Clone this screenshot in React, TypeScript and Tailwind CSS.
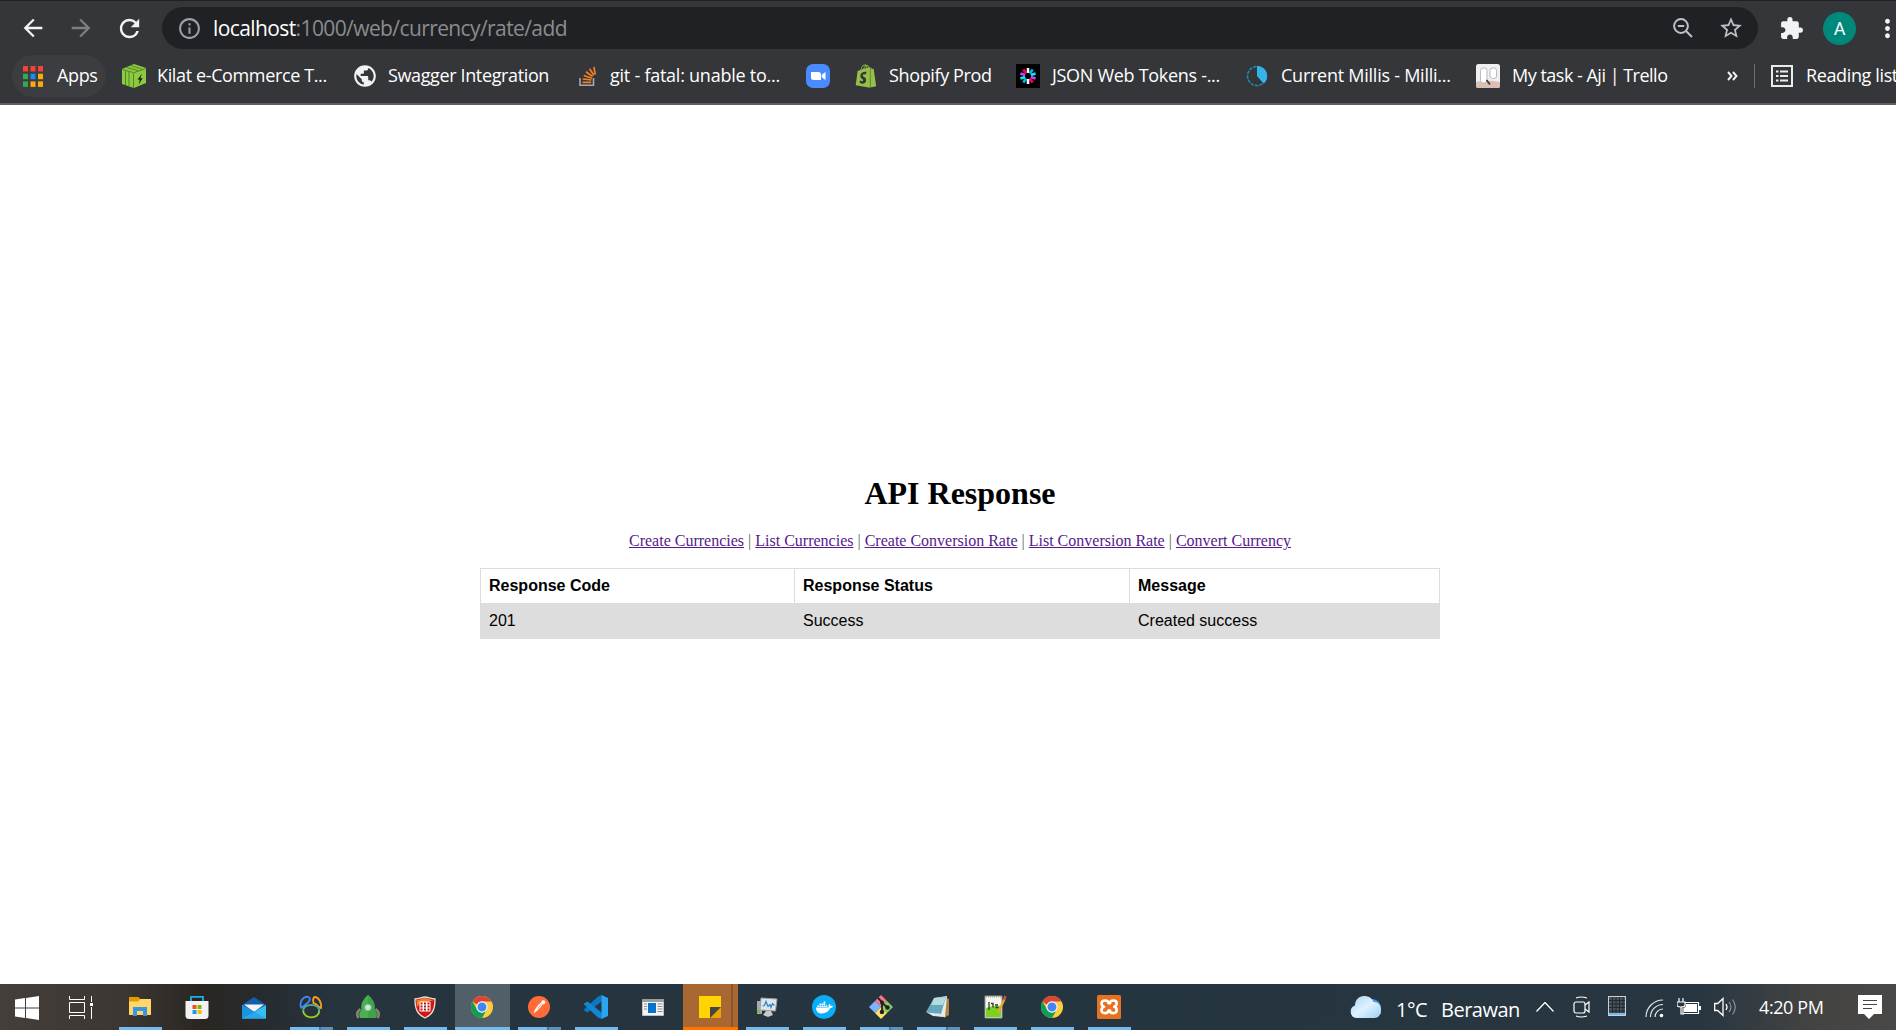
import React from 'react';
import { MdArrowBack, MdArrowForward, MdRefresh, MdInfoOutline, MdStarBorder, MdExtension, MdMoreVert, MdPublic } from 'react-icons/md';
import { FaDocker, FaShopify } from 'react-icons/fa';

type Kid = { children?: React.ReactNode };

function Svg({ w = 24, h = 24, box, children }: Kid & { w?: number; h?: number; box?: string }) {
  return (
    <svg width={w} height={h} viewBox={box ?? `0 0 ${w} ${h}`} fill="none" className="shrink-0">
      {children}
    </svg>
  );
}

const Apps = () => (
  <Svg w={20} h={21}>
    {['#f44336', '#f44336', '#f44336', '#34a853', '#1e88f5', '#fbaa0a', '#34a853', '#fbaa0a', '#fbaa0a'].map((c, i) => (
      <rect key={i} x={(i % 3) * 7.5} y={Math.floor(i / 3) * 7.7} width="5" height="5.5" fill={c} />
    ))}
  </Svg>
);

const Kilat = () => (
  <Svg w={24} h={24}>
    <path d="M0 5 12 0l12 4v15L12 24 0 20Z" fill="#8ccb3f" />
    <path d="M.5 5.500 11 8.500M4.500 3.500 16 6.500M8.500 1.500 20 5M3.500 7v14M7 8v14.500M11.500 9v15M11.500 8.800 24 4.500" stroke="#4d7d22" strokeWidth=".9" />
    <path d="m20 9.500-4.500 6 2.200.2-1 4.800 4-6.300-2.200-.2Z" fill="#1f2d15" />
  </Svg>
);

const Globe = () => <MdPublic size={26} color="#f1f3f4" className="-ml-[2px] shrink-0" />;

const Stack = () => (
  <Svg w={18} h={20}>
    <path d="M1 12v7.200h13.500V12" stroke="#a5a8ad" strokeWidth="1.600" />
    <path d="M3.500 16.300h8.700M3.800 13l8.600 1M4.800 9.500l8 2.700M7 5.800l6.600 4.700M10.500 2.800l4.500 6.400M14.800 1l1.600 7.500" stroke="#f48024" strokeWidth="1.700" />
  </Svg>
);

const Zoom = () => (
  <Svg w={24} h={24}>
    <rect width="24" height="24" rx="7" fill="#4a8cff" />
    <path d="M5 8h7.500q2.500 0 2.500 2.500V16H7.500Q5 16 5 13.500ZM15.800 10.800 19.500 8v8l-3.700-2.800Z" fill="#fff" />
  </Svg>
);

const Jwt = () => (
  <Svg w={24} h={24}>
    <rect width="24" height="24" fill="#000" />
    <g strokeWidth="2.600">
      {['#fff', '#00b9f1', '#00f2e6', '#d63aff', '#fb015b', '#fff', '#00b9f1', '#00f2e6', '#d63aff', '#fb015b'].map((c, i) => (
        <path key={i} d="M12 4v5" stroke={c} transform={`rotate(${i * 36} 12 12)`} />
      ))}
    </g>
  </Svg>
);

const Millis = () => (
  <Svg w={22} h={22}>
    <circle cx="11" cy="11" r="9.500" stroke="#2489b0" strokeWidth="1.500" strokeDasharray="3.500 1" />
    <path d="M11 1a10 10 0 0 1 6.500 17.600L11 11Z" fill="#35b4e8" />
  </Svg>
);

const Trello = () => (
  <Svg w={24} h={24}>
    <rect width="24" height="24" rx="2.500" fill="#f0eeee" />
    <path d="M0 18c8-2 16-1 24 0v3.500Q24 24 21.500 24h-19Q0 24 0 21.500Z" fill="#d9bfb4" />
    <rect x="4.500" y="4" width="6.500" height="15" rx="2.500" fill="#fff" stroke="#b9b9be" />
    <rect x="14" y="4" width="6.500" height="10.500" rx="2.500" fill="#fff" stroke="#b9b9be" />
    <path d="m10.500 16 3.500 4.500" stroke="#4b3732" strokeWidth="1.800" />
  </Svg>
);

const ReadingList = () => (
  <Svg w={22} h={22}>
    <rect x="1" y="1" width="20" height="20" stroke="#e8eaed" strokeWidth="2" />
    <path d="M5 6.500h2.500M5 11h2.500M5 15.500h2.500M9 6.500h8M9 11h8M9 15.500h8" stroke="#e8eaed" strokeWidth="2" />
  </Svg>
);

const ZoomOut = () => (
  <Svg w={20} h={20}>
    <circle cx="8" cy="8" r="6.900" stroke="#bdc1c6" strokeWidth="2" />
    <path d="M4.800 8h6.400M13 13l6 6" stroke="#bdc1c6" strokeWidth="2" />
  </Svg>
);

function Bookmark({ w, iw, icon, text }: { w: string; iw: string; icon: React.ReactNode; text: React.ReactNode }) {
  return (
    <div className={`flex h-full shrink-0 items-center ${w}`}>
      <div className={`flex shrink-0 items-center ${iw}`}>{icon}</div>
      <span className="pb-px">{text}</span>
    </div>
  );
}

/* Taskbar artwork */
const Windows = () => (
  <Svg>
    <path d="M0 3.500 10 2v9.500H0ZM11 1.900 24 0v11.500H11ZM0 12.500h10V22L0 20.500ZM11 12.500h13V24l-13-1.900Z" fill="#fff" />
  </Svg>
);
const TaskView = () => (
  <Svg>
    <path d="M.5 0v3.500h15V0M.5 6.500h15v10H.5ZM.5 23v-3.500h15V23M22.500 0v6M22.500 11v12" stroke="#fff" />
    <rect x="21" y="7" width="3" height="3" fill="#fff" />
  </Svg>
);
const Explorer = () => (
  <Svg w={22} h={20}>
    <path d="M0 0h9.500L12 2.500h10V8H0Z" fill="#e19c00" />
    <path d="M0 4.500h9L11.500 2H22v16H0Z" fill="#ffd766" />
    <path d="M4 10h14v9h-4v-5H8v5H4Z" fill="#3a96e0" />
  </Svg>
);
const Store = () => (
  <Svg w={24} h={24}>
    <path d="M6 7V1.800h12V7" stroke="#1ab0ea" strokeWidth="1.800" />
    <path d="M.500 6h23v14.500Q23.500 24 20 24H4Q.500 24 .500 20.500Z" fill="#f3f2f2" />
    <path d="M7.500 10h4v4h-4Z" fill="#f25022" />
    <path d="M12.500 10h4v4h-4Z" fill="#7fba00" />
    <path d="M7.500 15h4v4h-4Z" fill="#00a4ef" />
    <path d="M12.500 15h4v4h-4Z" fill="#ffb900" />
  </Svg>
);
const Mail = () => (
  <Svg w={24} h={23}>
    <path d="M0 9 12 1l12 8v6H0Z" fill="#0f5fae" />
    <path d="M2 8.500h20L12 16Z" fill="#f5f5f5" />
    <path d="M0 9v13.500h24V9l-12 7Z" fill="#35bdf2" />
    <path d="M0 9v13.500L13 16Z" fill="#1a94dc" />
    <path d="M24 22.500H0L13 16Z" fill="#28a8ea" />
  </Svg>
);
const Navicat = () => (
  <Svg w={24} h={24}>
    <path d="M2 12.500C0 6 5 1 9 1.800c3.500 1 1.500 5-.5 6.200L3 12.500Z" stroke="#4285f4" strokeWidth="1.900" />
    <path d="M14.500 8C13.500 4 14.500 1.500 16.500 2c3.500 1 6.500 6 5.500 11-3 0-3.500-4-7.500-5Z" stroke="#f9a01b" strokeWidth="1.900" />
    <path d="M4.200 16.500c-.5-5 4-6.500 8-6.500s8.500 2 8 6.500" stroke="#48a99b" strokeWidth="1.900" />
    <path d="M20.200 16c0 8.500-15.500 8.500-16 0" stroke="#9bc926" strokeWidth="1.900" />
  </Svg>
);
const Rocket = () => (
  <Svg w={24} h={24}>
    <path d="M4.500 14c-4 3-4 6-2 9M19.500 14c4 3 4 6 2 9" stroke="#8c806f" strokeWidth="2.500" />
    <path d="M12 0c5 4 7.500 9 6.500 14.500L21 19l-1 4H4l-1-4 2.500-4.500C4.500 9 7 4 12 0Z" fill="#4cb050" />
    <path d="M12 0v23h8l1-4-2.500-4.500C19.500 9 17 4 12 0Z" fill="#3fa34c" />
    <circle cx="12" cy="12.500" r="3.300" fill="#c9ebd7" stroke="#7bb98c" />
  </Svg>
);
const Shield = () => (
  <Svg w={22} h={23}>
    <path d="M1 3C5 3 8 1 11 1s6 2 10 2c0 9-1.500 15-10 19C2.500 18 1 12 1 3Z" fill="#d3150f" stroke="#e6dedb" strokeWidth="1.300" />
    <path d="M2.500 4C6 4 8 2 11 2s5 2 8.500 2C16 6 8 5 2.800 11Z" fill="#f0802c" />
    <rect x="5.500" y="5.500" width="11" height="10" rx="1" fill="#fff" />
    {[0, 1, 2].map((r) => (
      <path key={r} d={`M6.500 ${6.500 + r * 3}h2v2h-2ZM10 ${6.500 + r * 3}h2v2h-2ZM13.500 ${6.500 + r * 3}h2v2h-2Z`} fill="#b81410" />
    ))}
  </Svg>
);
const Chrome = () => (
  <Svg w={22} h={22} box="0 0 22 22">
    <circle cx="11" cy="11" r="11" fill="#ffcd40" />
    <path d="M1.470 5.500A11 11 0 0 1 20.530 5.500H11a5.500 5.500 0 0 0-5 3.300Z" fill="#db4437" />
    <path d="M1.470 5.500A11 11 0 0 0 11 22l4.760-8.250A5.500 5.500 0 0 1 6.240 13.750Z" fill="#0f9d58" />
    <circle cx="11" cy="11" r="5.100" fill="#4285f4" stroke="#f1f1f1" strokeWidth="1.300" />
  </Svg>
);
const Postman = () => (
  <Svg w={22} h={22}>
    <circle cx="11" cy="11" r="11" fill="#ff6c37" />
    <path d="M5.500 17.500c1-4.500 4-8 7.500-11l1.800 1.800c-2.800 3.700-5.500 7-9.300 9.200Z" fill="#fff" />
    <circle cx="15.300" cy="6.200" r="2" fill="#fff" />
    <path d="M9 13.500 13.500 8" stroke="#ff6c37" strokeWidth=".6" />
  </Svg>
);
const Code = () => (
  <Svg w={24} h={24}>
    <path d="m17.500 6.500-14 11L0 15.500v-1L14 1.500 18 0Z" fill="#0a76c4" />
    <path d="m17.500 17.500-14-11L0 8.500v1l14 13L18 24Z" fill="#1188d4" />
    <path d="m17.500 0 6.500 3v18l-6.500 3Z" fill="#2aa5f2" />
  </Svg>
);
const WindowApp = () => (
  <Svg w={22} h={17}>
    <rect width="22" height="17" fill="#f4f4f4" stroke="#8b8b8b" />
    <path d="M0 0h22v3H0Z" fill="#9b9b9b" />
    <rect x="6" y="4" width="8" height="10" fill="#0a70ce" />
    <path d="M2 5h3M2 7.500h3M2 10h3M15.500 5h5M15.500 7.500h5M15.500 10h5M15.500 12.500h5" stroke="#8b8b8b" />
  </Svg>
);
const Notes = () => (
  <Svg w={22} h={22}>
    <rect width="22" height="22" fill="#ffd400" />
    <path d="M11 22V11h11v11Z" fill="#eaa500" />
    <path d="M11 22V11h11Z" fill="#454545" />
  </Svg>
);
const Monitor = () => (
  <Svg w={22} h={20}>
    <path d="M1 4h5v13H1Z" fill="#aaa" />
    <path d="M1 13h3v3H1Z" fill="#6fc03c" />
    <path d="m5 1 16 1-1.500 12L4 13Z" fill="#dfe5ea" stroke="#9a9fa3" />
    <path d="m6.500 9 2-.5 1.500-4 2 5 2-2 1 3 1.500-4 2 2" stroke="#2885c5" strokeWidth="1.200" />
    <path d="M10 14h5l2 4-5 2-5-2Z" fill="#c9c9c9" />
  </Svg>
);
const Docker = () => (
  <div className="flex size-6 items-center justify-center rounded-full bg-[#0aadf8]">
    <FaDocker size={17} color="#fff" />
  </div>
);
const Git = () => (
  <Svg w={24} h={24}>
    <path d="m12 0 6 6-6 6-6-6Z" fill="#f37983" />
    <path d="m6 6 6 6-6 6-6-6Z" fill="#80b3ff" />
    <path d="m18 6 6 6-6 6-6-6Z" fill="#8ccf5e" />
    <path d="m12 12 6 6-6 6-6-6Z" fill="#ffe26b" />
    <path d="m9 3 4 4v10M13 8l5 4" stroke="#222" strokeWidth="1.800" />
    <circle cx="13" cy="7.500" r="2" fill="#222" />
    <circle cx="18.500" cy="12.500" r="2.300" fill="#222" />
    <circle cx="13" cy="17" r="2.300" fill="#222" />
  </Svg>
);
const Notepad = () => (
  <Svg w={24} h={22}>
    <path d="M20 2l3 1v16l-5 3Z" fill="#b5823b" />
    <path d="M8 2 21 0l-2 21-8-1Z" fill="#e6edf0" />
    <path d="M8 2 20 1l-5 17-15-2Z" fill="#64a9bb" />
    <path d="M8 2 20 1l-3 8-12 0Z" fill="#b3d9e1" />
    <path d="m0 16 15 2 4 3-12-1Z" fill="#dde7ea" />
  </Svg>
);
const NotepadPlus = () => (
  <Svg w={24} h={24}>
    <path d="M2 1h17v22H2Z" fill="#f3f7ed" stroke="#8f948b" />
    <path d="M3 13q8-3 15-2v11H3Z" fill="#77d31e" />
    <path d="M3 2h15" stroke="#999" strokeDasharray="1 1" />
    <path d="M6 7v8M8 8.500h2v4M12 10h3M12.500 12.500h3" stroke="#333" strokeWidth="1.300" />
    <path d="M21.500 4 15 18" stroke="#eaa42c" strokeWidth="2.400" />
    <path d="m21 5 1.500-4" stroke="#cf5149" strokeWidth="2.600" />
  </Svg>
);
const Xampp = () => (
  <Svg>
    <rect width="24" height="24" rx="1.500" fill="#e8711f" />
    <path
      d="M8 5.500Q4.500 5.500 4.500 8.300T7 11.800q-2.500.7-2.500 3.500t3.500 2.800 3.500-2.600h1.500q0 2.600 3.300 2.600t3.400-2.800-2.500-3.500q2.500-.7 2.500-3.500T16.300 5.500 13 8.300h-1.500Q11.500 5.500 8 5.500Z"
      stroke="#fff"
      strokeWidth="2.600"
      strokeLinejoin="round"
    />
  </Svg>
);

type Mode = 'none' | 'open' | 'multi' | 'active' | 'alert';
const tasks: [React.FC, Mode][] = [
  [Explorer, 'open'], [Store, 'none'], [Mail, 'none'], [Navicat, 'multi'], [Rocket, 'open'], [Shield, 'open'],
  [Chrome, 'active'], [Postman, 'multi'], [Code, 'open'], [WindowApp, 'none'], [Notes, 'alert'], [Monitor, 'open'],
  [Docker, 'open'], [Git, 'multi'], [Notepad, 'multi'], [NotepadPlus, 'open'], [Chrome, 'open'], [Xampp, 'open'],
];

function Task({ Icon, mode }: { Icon: React.FC; mode: Mode }) {
  const tint = mode === 'active' ? 'bg-[#515f68]' : mode === 'alert' ? 'bg-[#a96732]' : '';
  return (
    <div className="flex h-full w-[57px] shrink-0 justify-center">
      <div className={`relative flex h-full w-[55px] flex-col items-center ${tint}`}>
        {mode === 'alert' && <div className="absolute top-0 right-0 h-full w-[7px] border-l-2 border-[#8d542b]" />}
        <div className="relative flex h-[43px] items-center pt-[3px] pr-px"><Icon /></div>
        {mode === 'active' && <div className="h-[3px] w-full bg-[#76b9ed]" />}
        {mode === 'alert' && <div className="relative h-[3px] w-full bg-[#ff7300]" />}
        {mode === 'open' && <div className="h-[3px] w-[43px] bg-[#76b9ed]" />}
        {mode === 'multi' && (
          <div className="flex h-[3px] w-[43px]">
            <div className="w-[29px] bg-[#76b9ed]" />
            <div className="w-[2px] bg-[#4a7295]" />
            <div className="w-3 bg-[#5e91b8]" />
          </div>
        )}
      </div>
    </div>
  );
}

const Cloud = () => (
  <Svg w={33} h={24}>
    <defs>
      <linearGradient id="cloud" x1="0" y1="0" x2="1" y2="1">
        <stop stopColor="#a8d6f5" />
        <stop offset=".5" stopColor="#dff1fd" />
        <stop offset="1" stopColor="#9fd0f3" />
      </linearGradient>
    </defs>
    <path d="M20 4c6-1 12 3 12 9v6H20Z" fill="#4597dc" />
    <path d="M7 23a6.500 6.500 0 0 1-1-12.500C6 5 10 1 15 1c4.500 0 8 2 9.500 6 5 0 7.500 3.500 7.500 8s-2.500 8-6.500 8Z" fill="url(#cloud)" />
  </Svg>
);

const th = 'h-[35px] border border-[#dddddd] px-2 py-0 text-left align-middle font-bold leading-[18px]';
const td = 'h-[35px] border border-[#dddddd] px-2 pt-0 pb-px text-left align-middle leading-[18px]';

export default function App() {
  const links = ['Create Currencies', 'List Currencies', 'Create Conversion Rate', 'List Conversion Rate', 'Convert Currency'];
  return (
    <div className="flex h-[1030px] w-[1896px] flex-col overflow-hidden bg-white font-['Open_Sans','Noto_Sans',sans-serif]">
      <header className="flex h-[105px] shrink-0 flex-col border-t border-b-2 border-t-[#202124] border-b-[#5f5e62] bg-[#35363a] text-white">
        <div className="mt-[6px] flex h-[42px] shrink-0 items-center">
          <div className="flex w-[162px] shrink-0 items-center pl-[19px]">
            <MdArrowBack size={28} color="#f1f3f4" className="shrink-0" />
            <MdArrowForward size={28} color="#7e7f82" className="ml-5 shrink-0" />
            <MdRefresh size={29} color="#f1f3f4" className="ml-[20px] shrink-0" />
          </div>
          <div className="flex h-full w-[1596px] shrink-0 items-center rounded-full bg-[#202124]">
            <MdInfoOutline size={25} color="#9aa0a6" className="ml-[15px] shrink-0" />
            <div className="ml-[11px] w-[360px] pt-[2px] text-[21px] tracking-[-0.6px] whitespace-nowrap text-[#8b8c8f]">
              <span className="text-white">localhost</span>:1000/web/currency/rate/add
            </div>
            <div className="ml-auto flex items-center pr-[14px]">
              <ZoomOut />
              <MdStarBorder size={26} color="#bdc1c6" className="ml-[25px]" />
            </div>
          </div>
          <MdExtension size={25} color="#f1f3f4" className="ml-[21px] shrink-0" />
          <div className="ml-[19px] flex size-[33px] shrink-0 items-center justify-center rounded-full bg-[#00897b] font-['Roboto',sans-serif] text-[18px] text-white">A</div>
          <MdMoreVert size={29} color="#f1f3f4" className="ml-[17px] shrink-0" />
        </div>
        <div className="mt-[6px] flex h-[42px] items-center text-[18px] tracking-[-0.37px] whitespace-nowrap">
          <div className="ml-3 flex h-full w-[94px] shrink-0 items-center rounded-full bg-[#3c3d41] pl-[11px]">
            <Apps />
            <span className="ml-[14px] pb-px">Apps</span>
          </div>
          <div className="ml-4 flex h-full shrink-0 items-center">
            <Bookmark w="w-[232px]" iw="w-[35px]" icon={<Kilat />} text="Kilat e-Commerce T..." />
            <Bookmark w="w-[225px]" iw="w-[34px]" icon={<Globe />} text="Swagger Integration" />
            <Bookmark w="w-[227px]" iw="w-[31px]" icon={<Stack />} text={<span className="tracking-[-0.25px]">git - fatal: unable to...</span>} />
            <Bookmark w="w-12" iw="w-8" icon={<Zoom />} text="" />
            <Bookmark w="w-[162px]" iw="w-[35px]" icon={<FaShopify size={24} color="#95bf47" />} text="Shopify Prod" />
            <Bookmark w="w-[230px]" iw="w-9" icon={<Jwt />} text={<span className="tracking-[-0.3px]">JSON Web Tokens -...</span>} />
            <Bookmark w="w-[230px]" iw="w-[35px]" icon={<Millis />} text={<span className="tracking-[-0.25px]">Current Millis - Milli...</span>} />
            <Bookmark w="w-[251px]" iw="w-[36px]" icon={<Trello />} text={<span className="tracking-[-0.5px]">My task - Aji | Trello</span>} />
          </div>
          <svg width="11" height="10" viewBox="0 0 11 10" fill="none" className="shrink-0">
            <path d="m1 1 3.500 4L1 9M6 1l3.500 4L6 9" stroke="#f1f3f4" strokeWidth="1.900" />
          </svg>
          <div className="ml-4 h-6 w-px shrink-0 bg-[#6b6c70]" />
          <div className="ml-4 flex w-[35px] shrink-0"><ReadingList /></div>
          <span className="pb-px">Reading list</span>
        </div>
      </header>

      <main className="flex h-[879px] shrink-0 flex-col items-center pl-6 text-black">
        <h1 className="mt-[370px] h-[37px] font-['Liberation_Serif',serif] text-[32px] leading-[37px] font-bold">API Response</h1>
        <nav className="mt-[20px] h-[18px] font-['Liberation_Serif',serif] text-base leading-[18px] whitespace-nowrap">
          {links.map((l, i) => (
            <React.Fragment key={l}>
              {i > 0 && <span className="text-[#666]"> | </span>}
              <a href="#" className="text-[#551a8b] underline">{l}</a>
            </React.Fragment>
          ))}
        </nav>
        <table className="mt-[18px] w-[960px] table-fixed border-collapse font-['Liberation_Sans',sans-serif] text-base">
          <colgroup>
            <col className="w-[314px]" />
            <col className="w-[335px]" />
            <col />
          </colgroup>
          <thead>
            <tr>
              <th className={th}>Response Code</th>
              <th className={th}>Response Status</th>
              <th className={th}>Message</th>
            </tr>
          </thead>
          <tbody>
            <tr className="bg-[#dddddd]">
              <td className={td}>201</td>
              <td className={td}>Success</td>
              <td className={td}>Created success</td>
            </tr>
          </tbody>
        </table>
      </main>

      <footer className="flex h-[46px] shrink-0 items-center bg-[linear-gradient(90deg,#443f3b_0px,#3b3632_130px,#2a2621_200px,#272c30_270px,#26343e_330px,#253540_1000px,#273641_1700px,#434342_1810px,#4a4846_1896px)] text-white">
        <div className="flex w-[54px] justify-center pt-[1px]"><Windows /></div>
        <div className="flex w-[58px] pt-[1px] pl-[15px]"><TaskView /></div>
        <div className="flex h-full">
          {tasks.map(([Icon, mode], i) => <Task key={i} Icon={Icon} mode={mode} />)}
        </div>
        <div className="ml-[211px] flex h-full items-center whitespace-nowrap">
          <Cloud />
          <span className="ml-[14px] w-[45px] pt-[5px] text-[20px] tracking-[-0.5px]">1°C</span>
          <span className="w-[95px] pt-[5px] text-[20px] tracking-[-0.5px]">Berawan</span>
          <Svg w={18} h={10}><path d="m.5 9.500 8.500-9 8.500 9" stroke="#fff" strokeWidth="1.300" /></Svg>
          <div className="ml-[19px]">
            <Svg w={18} h={22}>
              <path d="M3 2q5-2 11 0M3 20q5 2 11 0M12 9l4-3v10l-4-3" stroke="#fff" strokeWidth="1.200" />
              <rect x="1" y="6" width="11" height="11" rx="2" stroke="#fff" strokeWidth="1.200" />
            </Svg>
          </div>
          <div className="ml-[17px] pb-[2px]">
            <Svg w={18} h={20}>
              <rect x=".5" y=".5" width="17" height="19" fill="#4a535a" stroke="#c9cfd3" />
              <path d="M4.500 1v16M8 1v16M11.500 1v16M15 1v16M1 4.500h16M1 8h16M1 11.500h16M1 15h16" stroke="#222a31" />
              <path d="M1 18h16" stroke="#6fc0f2" strokeWidth="2" />
            </Svg>
          </div>
          <div className="ml-[19px] pt-[3px]">
            <Svg w={19} h={19}>
              <path d="M1 18A17 17 0 0 1 18 1M5.500 18A12.500 12.500 0 0 1 18 5.500M10 18a8 8 0 0 1 8-8" stroke="#e6e9eb" strokeWidth="1.200" />
              <circle cx="16.500" cy="16.500" r="1.800" fill="#fff" />
            </Svg>
          </div>
          <div className="ml-[13px]">
            <Svg w={24} h={18}>
              <path d="M2 0v4M6 0v4M0 4h8v3q0 2-4 2Q0 9 0 7ZM4 9v7h3" stroke="#fff" strokeWidth="1.200" />
              <path d="M8 4.500h13.500v11H6V10" stroke="#fff" strokeWidth="1.200" />
              <path d="M9 6h11v8H7v-4q2-1 2-3ZM22 8h2v4h-2Z" fill="#fff" />
            </Svg>
          </div>
          <div className="ml-[13px]">
            <Svg w={23} h={20}>
              <path d="M.7 6.500h3L9 1.500v17l-5.300-5h-3Z" stroke="#fff" strokeWidth="1.300" />
              <path d="M12 7q2 3 0 6" stroke="#fff" strokeWidth="1.300" />
              <path d="M15 5q4 5 0 10M18.500 2.500q5.500 7.500 0 15" stroke="#8a949b" strokeWidth="1.200" />
            </Svg>
          </div>
          <span className="ml-[22px] w-[99px] pt-px text-[18px] tracking-[-0.4px]">4:20 PM</span>
          <Svg w={24} h={24}>
            <path d="M0 0h24v19h-8l-5 5-5-5H0Z" fill="#fff" />
            <path d="M5 5.500h14M5 9.500h14M5 13.500h9" stroke="#43474a" strokeWidth="1.200" />
          </Svg>
        </div>
      </footer>
    </div>
  );
}
